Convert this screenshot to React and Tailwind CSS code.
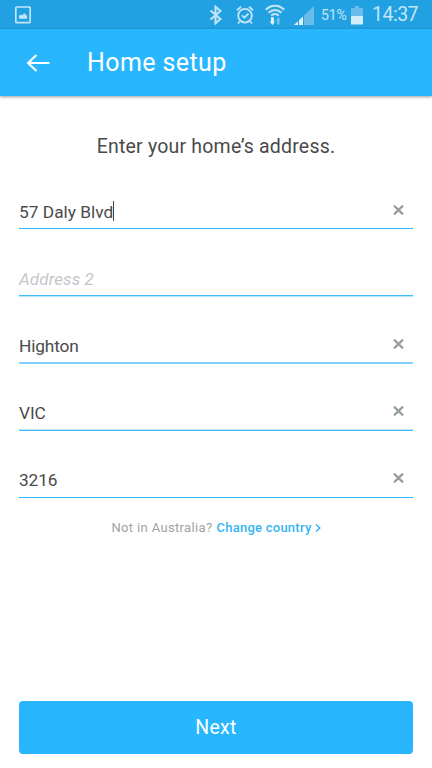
import React, { useState } from 'react';

// The rules sit on half pixels, so each one is a pair of 1px strips
const FIELDS = [
  { id: 'address1', value: '57 Daly Blvd', top: 'bg-[#28b6ff]', bottom: 'bg-white', text: 'tracking-[0.02px]', focused: true },
  { id: 'address2', value: '', placeholder: 'Address 2', top: 'bg-[#40bcfb]', bottom: 'bg-[#b5e4fd]', text: 'tracking-[0.1px]' },
  { id: 'city', value: 'Highton', top: 'bg-[#7dd1ff]', bottom: 'bg-[#7dd1ff]', text: 'tracking-[-0.15px]' },
  { id: 'state', value: 'VIC', top: 'bg-[#b5e4fd]', bottom: 'bg-[#40bcfb]', text: 'tracking-[-0.1px]' },
  { id: 'postcode', value: '3216', top: 'bg-white', bottom: 'bg-[#28b6ff]', text: 'tracking-[-0.1px]' },
];

function StatusBar() {
  return (
    <div className="flex h-[29px] items-center bg-[#22a1e2] pl-[15px] pr-[14px] text-[#c3e5f7]">
      <svg className="h-[18px] w-4" viewBox="0 0 16 18" fill="none">
        <rect x="0.8" y="1" width="14.4" height="15.6" rx="1" stroke="currentColor" strokeWidth="1.7" />
        <path d="M4 12.8V10l1.8-1.6L7.2 9.5 9.3 7l1.4 2 1.4.8v3z" fill="currentColor" />
      </svg>

      <div className="ml-auto flex items-center">
        <svg className="h-5 w-[13px]" viewBox="0 0 13 20" fill="none" stroke="currentColor" strokeWidth="2.1">
          <path d="M1.5 5.5l10 8.5-5 4.3V1.7l5 4.3-10 8.5" />
        </svg>
        <svg className="ml-[14px] h-5 w-[18px]" viewBox="0 0 18 20" fill="none" stroke="currentColor" strokeWidth="1.8">
          <circle cx="9" cy="10.7" r="6.8" />
          <path d="M1 5.2L5 1.8M17 5.2l-4-3.4M3.8 16.5L2 18.5M14.2 16.5l1.8 2M6 10.3l2.4 2.4 4-4" />
        </svg>
        <svg className="ml-[11px] h-[22px] w-5" viewBox="0 0 20 22" fill="none" stroke="currentColor" strokeWidth="2.1">
          <path d="M0.8 5.8C6 .3 14 .3 19.2 5.8M3.6 8.8c3.8-3.8 9-3.8 12.8 0M6.3 11.6c2.4-2.1 5-2.1 7.4 0" />
          <path d="M8.9 13.2v4.3H10L7.4 21.2 4.8 17.5H6v-4.3z" fill="#def2fc" stroke="none" />
          <path d="M12 20.6v-4h-1.3l2.6-3.6 2.6 3.6h-1.3v4z" fill="#6ec1ee" stroke="none" />
        </svg>
        <svg className="ml-[9px] h-5 w-5" viewBox="0 0 20 20">
          <path d="M0 20L20 1v19z" fill="#69bdea" />
          <path d="M0 20L9 11.5V20z" fill="#def2fc" />
          <path d="M4.5 14v6M9.5 10v10" stroke="#22a1e2" strokeWidth="1" />
        </svg>
        <span className="ml-[7px] w-[27px] whitespace-nowrap text-[14px] leading-5 tracking-[-0.15px]">51%</span>
        <svg className="ml-[3px] h-5 w-3" viewBox="0 0 12 20">
          <path d="M0 3h4V1h4v2h4v8H0z" fill="#69bdea" />
          <path d="M0 11h12v8.5H0z" fill="#d3ecf9" />
        </svg>
        <span className="ml-[9px] mt-px w-[46px] whitespace-nowrap text-[19.5px] leading-5 tracking-[-0.5px]">14:37</span>
      </div>
    </div>
  );
}

function AppBar() {
  return (
    <header className="flex h-[67px] items-center bg-[#28b6ff] pl-[26px] text-white shadow-[0_1px_3px_rgba(0,0,0,0.4)]">
      <svg className="h-[18px] w-6" viewBox="0 0 24 18" fill="none" stroke="currentColor" strokeWidth="2.1">
        <path d="M23.5 9H2M10.5 1L2 9l8.5 8" />
      </svg>
      <h1 className="ml-[37px] text-[25px] leading-8 tracking-[0.4px]">Home setup</h1>
    </header>
  );
}

function Field({ field, value, onChange }) {
  return (
    <div className="flex h-[67px] flex-col justify-end">
      <div className="flex h-[34px] items-center">
        {value ? (
          <>
            <span className={`pt-px text-[17.3px] leading-6 text-[#4a4a4a] ${field.text}`}>{value}</span>
            {field.focused && <span className="h-5 w-px bg-[#444]" />}
            <button className="mb-[3px] ml-auto mr-[9px]" onClick={() => onChange('')} aria-label="Clear">
              <svg className="h-[10px] w-[11px]" viewBox="0 0 11 10" fill="none" stroke="#949ca1" strokeWidth="2.2">
                <path d="M1 .6l9 8.8M10 .6L1 9.4" />
              </svg>
            </button>
          </>
        ) : (
          <span className={`pt-0.5 text-[17px] italic leading-6 text-[#c3c6cb] ${field.text}`}>{field.placeholder}</span>
        )}
      </div>
      <div className={`h-px ${field.top}`} />
      <div className={`h-px ${field.bottom}`} />
    </div>
  );
}

export default function App() {
  const [values, setValues] = useState(() => Object.fromEntries(FIELDS.map((f) => [f.id, f.value])));

  return (
    <div className="flex h-[768px] w-[432px] flex-col overflow-hidden bg-white font-[Roboto,sans-serif]">
      <StatusBar />
      <AppBar />

      <main className="flex flex-1 flex-col px-[19px] pb-[14px]">
        <h2 className="mt-[37px] text-center text-[19.5px] leading-7 tracking-[0.2px] text-[#4a4a4a]">
          Enter your home’s address.
        </h2>

        <div className="mt-[2px]">
          {FIELDS.map((field) => (
            <Field
              key={field.id}
              field={field}
              value={values[field.id]}
              onChange={(v) => setValues({ ...values, [field.id]: v })}
            />
          ))}
        </div>

        <p className="mt-[20px] flex items-center justify-center text-[13px] leading-5 tracking-[0.35px] text-[#9da3a8]">
          Not in Australia?
          <a className="ml-1 flex items-center font-medium tracking-[0.25px] text-[#35b5f2]">
            Change country
            <svg className="ml-[3px] h-2 w-[6px]" viewBox="0 0 6 8" fill="none" stroke="currentColor" strokeWidth="1.4">
              <path d="M1 .5L4.8 4 1 7.5" />
            </svg>
          </a>
        </p>

        <button className="mt-auto h-[53px] rounded-[4px] bg-[#28b6ff] text-[19.5px] tracking-[0.3px] text-white">
          Next
        </button>
      </main>
    </div>
  );
}
